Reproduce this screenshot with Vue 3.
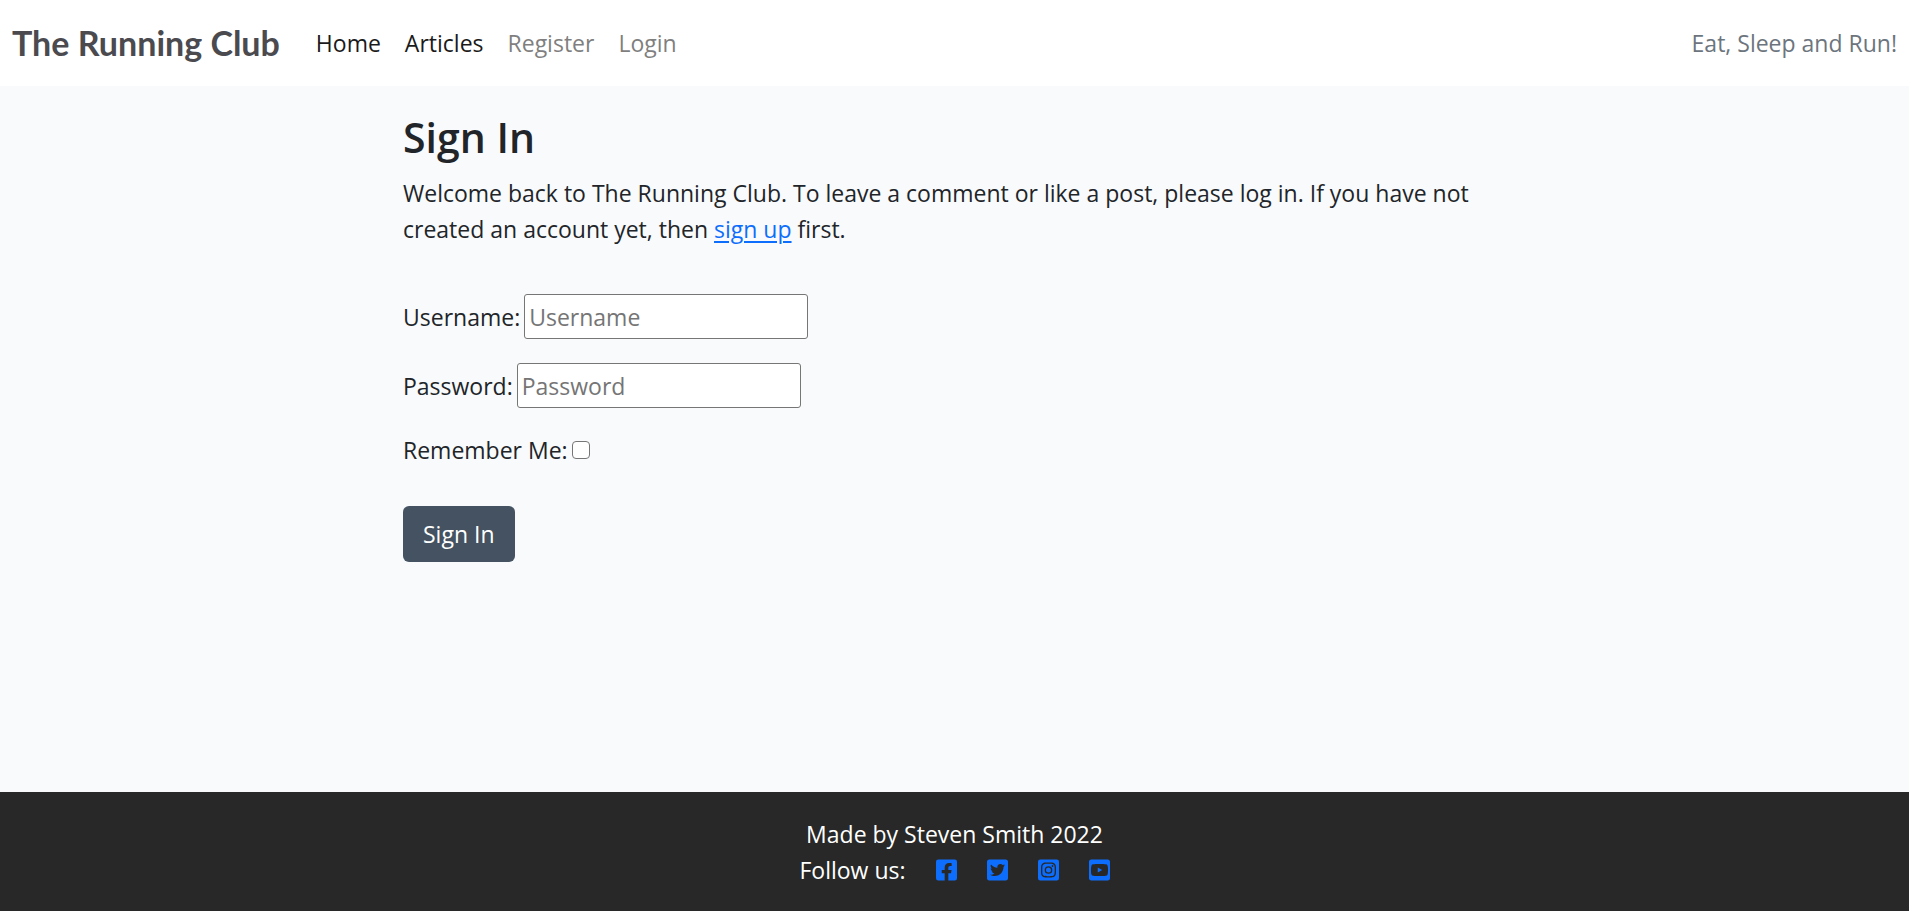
<script setup>
import { ref } from 'vue'

const username = ref('')
const password = ref('')
const remember = ref(false)

const links = [
  { text: 'Home', dark: true },
  { text: 'Articles', dark: true },
  { text: 'Register', dark: false },
  { text: 'Login', dark: false },
]

const socials = [
  {
    name: 'Facebook',
    path: 'M400 32H48A48 48 0 0 0 0 80v352a48 48 0 0 0 48 48h137.25V327.69h-63V256h63v-54.64c0-62.15 37-96.48 93.67-96.48 27.14 0 55.52 4.84 55.52 4.84v61h-31.27c-30.81 0-40.42 19.12-40.42 38.73V256h68.78l-11 71.69h-57.78V480H400a48 48 0 0 0 48-48V80a48 48 0 0 0-48-48z',
  },
  {
    name: 'Twitter',
    path: 'M400 32H48C21.5 32 0 53.5 0 80v352c0 26.5 21.5 48 48 48h352c26.5 0 48-21.5 48-48V80c0-26.5-21.5-48-48-48zm-48.9 158.8c.2 2.8.2 5.7.2 8.5 0 86.7-66 186.6-186.6 186.6-37.2 0-71.7-10.8-100.7-29.4 5.3.6 10.4.8 15.8.8 30.7 0 58.9-10.4 81.4-28-28.8-.6-53-19.5-61.3-45.5 10.1 1.5 19.2 1.5 29.6-1.2-30-6.1-52.5-32.5-52.5-64.4v-.8c8.7 4.9 18.9 7.9 29.6 8.3a65.447 65.447 0 0 1-29.2-54.6c0-12.2 3.2-23.4 8.9-33.1 32.3 39.8 80.8 65.8 135.2 68.6-9.3-44.5 24-80.6 64-80.6 18.9 0 35.9 7.9 47.9 20.7 14.8-2.8 29-8.3 41.6-15.8-4.9 15.2-15.2 28-28.8 36.1 13.2-1.4 26-5.1 37.8-10.2-8.9 13.1-20.1 24.7-32.9 34z',
  },
  {
    name: 'Instagram',
    path: 'M224,202.66A53.34,53.34,0,1,0,277.36,256,53.38,53.38,0,0,0,224,202.66Zm124.71-41a54,54,0,0,0-30.41-30.41c-21-8.29-71-6.43-94.3-6.43s-73.25-1.93-94.31,6.43a54,54,0,0,0-30.41,30.41c-8.28,21-6.43,71.05-6.43,94.33S91,329.26,99.32,350.33a54,54,0,0,0,30.41,30.41c21,8.29,71,6.43,94.31,6.43s73.24,1.93,94.3-6.43a54,54,0,0,0,30.41-30.41c8.35-21,6.43-71.05,6.43-94.33S357.1,182.74,348.75,161.67ZM224,338a82,82,0,1,1,82-82A81.9,81.9,0,0,1,224,338Zm85.38-148.3a19.14,19.14,0,1,1,19.13-19.14A19.1,19.1,0,0,1,309.42,189.74ZM400,32H48A48,48,0,0,0,0,80V432a48,48,0,0,0,48,48H400a48,48,0,0,0,48-48V80A48,48,0,0,0,400,32ZM382.88,322c-1.29,25.63-7.14,48.34-25.85,67s-41.4,24.63-67,25.85c-26.41,1.49-105.59,1.49-132,0-25.63-1.29-48.26-7.15-67-25.85s-24.63-41.42-25.85-67c-1.49-26.42-1.49-105.61,0-132,1.29-25.63,7.07-48.34,25.85-67s41.47-24.56,67-25.78c26.41-1.49,105.59-1.49,132,0,25.63,1.29,48.33,7.15,67,25.85s24.63,41.42,25.85,67.05C384.37,216.44,384.37,295.56,382.88,322Z',
  },
  {
    name: 'YouTube',
    path: 'M186.8 202.1l95.2 54.1-95.2 54.1V202.1zM448 80v352c0 26.5-21.5 48-48 48H48c-26.5 0-48-21.5-48-48V80c0-26.5 21.5-48 48-48h352c26.5 0 48 21.5 48 48zm-42 176.3s0-59.6-7.6-88.2c-4.2-15.8-16.5-28.2-32.2-32.4C337.9 128 224 128 224 128s-113.9 0-142.2 7.7c-15.7 4.2-28 16.6-32.2 32.4-7.6 28.5-7.6 88.2-7.6 88.2s0 59.6 7.6 88.2c4.2 15.8 16.5 27.7 32.2 31.9C110.1 384 224 384 224 384s113.9 0 142.2-7.7c15.7-4.2 28-16.1 32.2-31.9 7.6-28.5 7.6-88.1 7.6-88.1z',
  },
]
</script>

<template>
  <div class="page">
    <header class="navbar">
      <a class="brand" href="#">The Running Club</a>
      <nav class="links">
        <a v-for="l in links" :key="l.text" href="#" :class="{ dark: l.dark }">{{ l.text }}</a>
      </nav>
      <span class="tagline">Eat, Sleep and Run!</span>
    </header>

    <main class="content">
      <h1>Sign In</h1>
      <p>
        Welcome back to The Running Club. To leave a comment or like a post, please log in. If you have not
        created an account yet, then <a href="#">sign up</a> first.
      </p>
      <form @submit.prevent>
        <div class="field">
          <label for="username">Username:</label>
          <input id="username" v-model="username" type="text" placeholder="Username" />
        </div>
        <div class="field">
          <label for="password">Password:</label>
          <input id="password" v-model="password" type="password" placeholder="Password" />
        </div>
        <div class="field">
          <label for="remember">Remember Me:</label>
          <input id="remember" v-model="remember" type="checkbox" />
        </div>
        <button type="submit">Sign In</button>
      </form>
    </main>

    <footer class="footer">
      <div>Made by Steven Smith 2022</div>
      <div class="follow">
        <span>Follow us:</span>
        <a v-for="s in socials" :key="s.name" href="#" :aria-label="s.name">
          <svg viewBox="0 0 448 512" aria-hidden="true"><path :d="s.path" /></svg>
        </a>
      </div>
    </footer>
  </div>
</template>

<style>
body {
  margin: 0;
  background: #f9fafc;
}
</style>

<style scoped>
.page {
  display: flex;
  flex-direction: column;
  min-height: 100vh;
  color: #212529;
  font-family: "Segoe UI", "Open Sans", "Noto Sans", sans-serif;
  font-size: 23px;
  line-height: 36px;
}

.navbar {
  display: flex;
  align-items: center;
  padding: 16px 12px;
  background: #fff;
}

.brand {
  margin-right: 36px;
  color: #4a4a4f;
  font-family: Lato, sans-serif;
  font-size: 34px;
  font-weight: 700;
  line-height: 54px;
  text-decoration: none;
}

.links {
  display: flex;
  gap: 24px;
}

.links a {
  color: #7f7f7f;
  text-decoration: none;
}

.links a.dark {
  color: #1a1a1a;
}

.tagline {
  margin-left: auto;
  color: #6c757d;
}

.content {
  flex: 1;
  box-sizing: border-box;
  width: 100%;
  max-width: 1103px;
  margin: 0 auto;
  padding-top: 25px;
}

h1 {
  margin: 0 0 12px;
  font-size: 41px;
  font-weight: 600;
  line-height: 52px;
}

p {
  margin: 0 0 47px;
}

p a {
  color: #0d6efd;
  text-decoration-thickness: 2px;
  text-underline-offset: 3px;
}

.field {
  display: flex;
  align-items: center;
  gap: 4px;
  margin-bottom: 24px;
}

input {
  box-sizing: border-box;
  margin: 0;
  font: inherit;
}

input[type="text"],
input[type="password"] {
  width: 284px;
  height: 45px;
  padding: 0 4px;
  border: 1px solid #767676;
  border-radius: 3px;
  background: #fff;
}

input::placeholder {
  color: #757575;
  opacity: 1;
}

input[type="checkbox"] {
  appearance: none;
  width: 18px;
  height: 18px;
  border: 1px solid #767676;
  border-radius: 4px;
  background: #fff;
}

input[type="checkbox"]:checked {
  background: #0d6efd;
}

button {
  margin-top: 14px;
  padding: 10px 20px;
  border: 0;
  border-radius: 6px;
  background: #445261;
  color: #fff;
  font: inherit;
}

.footer {
  padding: 24px 12px 23px;
  background: #282828;
  color: #fff;
  text-align: center;
}

.follow {
  display: flex;
  justify-content: center;
  gap: 30px;
}

.follow a {
  display: flex;
  align-items: center;
}

.follow svg {
  width: 21px;
  height: 24px;
  fill: #0d6efd;
}
</style>
